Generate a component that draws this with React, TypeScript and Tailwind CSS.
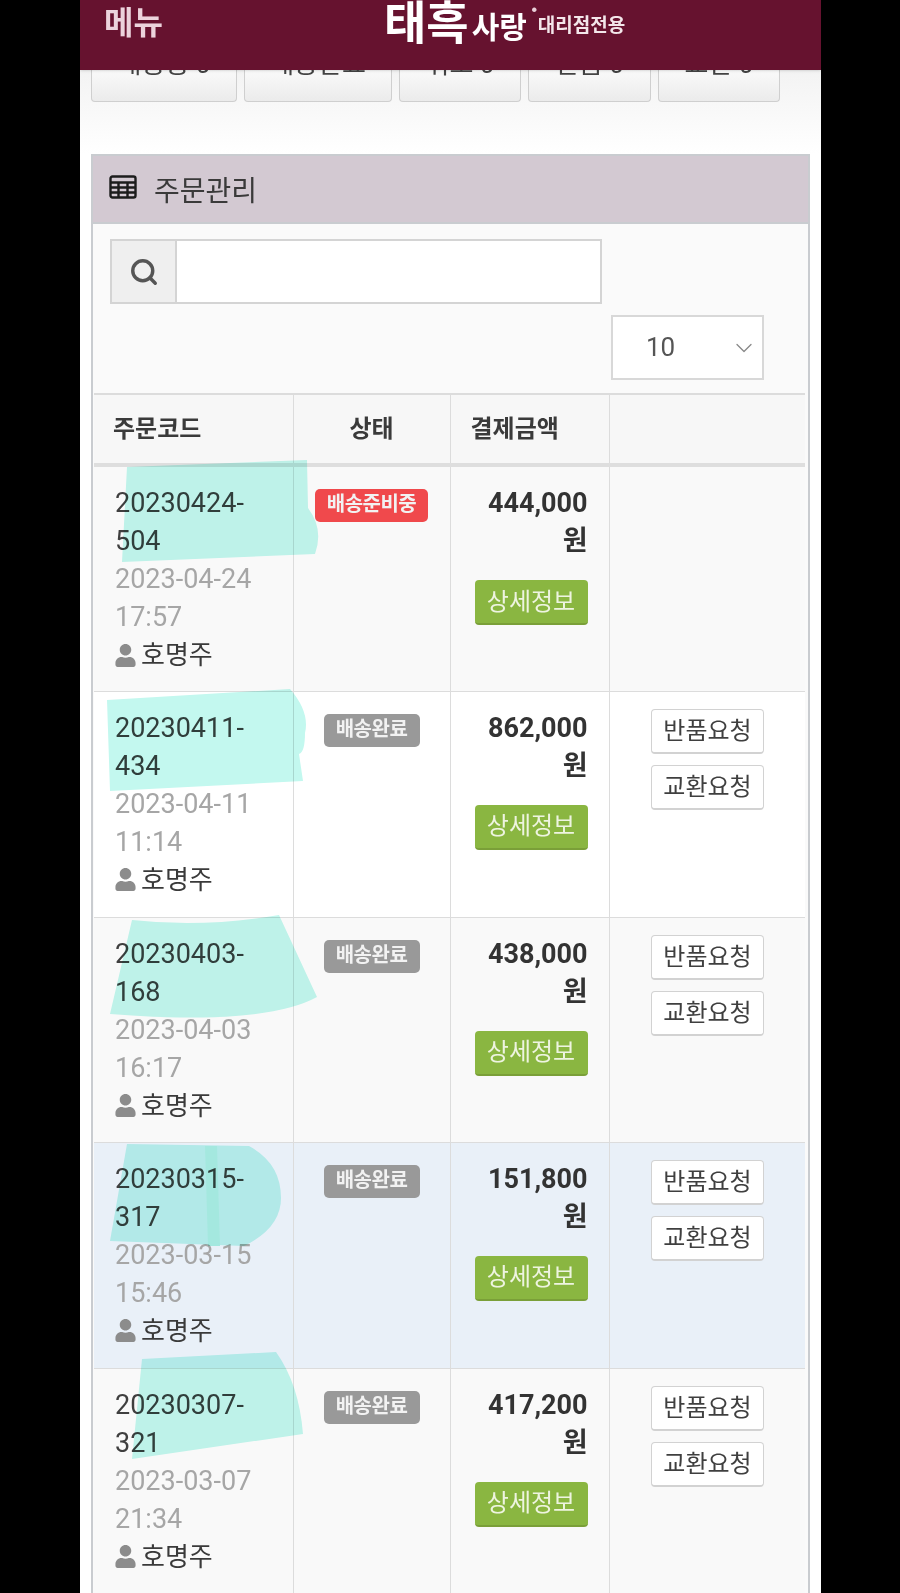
import React from 'react';
import { ChevronDown, Search } from 'lucide-react';
import { FaUser } from 'react-icons/fa';

const orders = [
  {
    code: '20230424-504', date: '2023-04-24 17:57', status: '배송준비중', amount: '444,000', height: 'h-[226px]', bg: 'bg-[#f9f9f9]',
    mark: 'M33 0 L213 -7 L214 41 Q230 62 221 87 L28 95 Z',
  },
  {
    code: '20230411-434', date: '2023-04-11 11:14', status: '배송완료', amount: '862,000', height: 'h-[226px]', bg: 'bg-white',
    mark: 'M13 8 L196 -3 Q216 20 211 41 Q211 60 205 62 L209 89 L16 99 Z',
  },
  {
    code: '20230403-168', date: '2023-04-03 16:17', status: '배송완료', amount: '438,000', height: 'h-[225px]', bg: 'bg-[#f9f9f9]',
    mark: 'M38 2 Q110 10 185 -3 L223 79 Q170 108 16 96 Z',
  },
  {
    code: '20230315-317', date: '2023-03-15 15:46', status: '배송완료', amount: '151,800', height: 'h-[226px]', bg: 'bg-[#e9f0f8]',
    mark: 'M33 1 L155 3 Q187 20 187 55 Q187 85 150 103 L16 98 Z',
  },
  {
    code: '20230307-321', date: '2023-03-07 21:34', status: '배송완료', amount: '417,200', height: 'h-[226px]', bg: 'bg-[#f9f9f9]',
    mark: 'M48 -10 L182 -17 Q205 15 209 65 L38 90 Z',
  },
];

const tabs = [
  { label: '배송중 0', width: 'w-[146px]' },
  { label: '배송완료', width: 'w-[148px]' },
  { label: '취소 0', width: 'w-[122px]' },
  { label: '반품 0', width: 'w-[123px]' },
  { label: '교환 0', width: 'w-[122px]' },
];

function Highlight({ d, strip }: { d: string; strip: boolean }) {
  return (
    <svg className="absolute left-0 top-0 z-10 overflow-visible mix-blend-multiply" width="240" height="110" viewBox="0 0 240 110">
      <path d={d} fill="#c3f8ef" />
      {strip && <polygon points="111,3 123,3 126,103 114,103" fill="#b4f7e6" />}
    </svg>
  );
}

function TableIcon() {
  return (
    <svg width="28" height="24" viewBox="0 0 28 24" fill="none" stroke="#1c1c1c" strokeWidth="2.4">
      <rect x="1.5" y="1.5" width="25" height="21" rx="2" />
      <path d="M1.5 7.5h25M1.5 12.5h25M1.5 17.5h25M9.5 7.5v15M18.5 7.5v15" />
    </svg>
  );
}

export default function App() {
  return (
    <div className="h-[1593px] w-[900px] overflow-hidden bg-black font-['Roboto','Noto_Sans_CJK_KR',sans-serif] text-[#3a3a3a]">
      <div className="ml-[80px] h-full w-[741px] bg-white">
        {/* Top bar */}
        <div className="relative flex h-[70px] items-start overflow-hidden bg-[#66122f] shadow">
          <span className="ml-[24px] mt-[4px] text-[32px] font-bold leading-[38px] text-[#ecd3dc]">메뉴</span>
          <div className="absolute left-[304px] top-[-5px] flex items-center whitespace-nowrap text-white">
            <span className="text-[46px] font-bold leading-[56px]">태흑</span>
            <span className="ml-[3px] mt-[10px] text-[30px] font-bold leading-[36px]">사랑</span>
            <span className="ml-[5px] self-start pt-[11px] text-[5px] leading-[6px] text-[#e8cfd8]">●</span>
            <span className="ml-[1px] mt-[6px] text-[19px] font-bold leading-[24px] text-[#f3e6ea]">대리점전용</span>
          </div>
        </div>

        {/* Status tabs, cut off by the top bar */}
        <div className="h-[84px] bg-gradient-to-b from-[#f3f3f3] to-white pl-[11px]">
          <div className="flex gap-[7px]">
            {tabs.map((tab) => (
              <div
                key={tab.label}
                className={`flex h-[32px] items-end justify-center overflow-hidden rounded-b border border-t-0 border-[#cfcfcf] bg-gradient-to-b from-[#fafafa] to-[#ebebeb] pb-[24px] text-[26px] leading-[26px] text-[#444] ${tab.width}`}
              >
                <span className="whitespace-nowrap">{tab.label}</span>
              </div>
            ))}
          </div>
        </div>

        {/* Order panel */}
        <div className="ml-[11px] h-[1439px] w-[719px] border-2 border-b-0 border-[#c9ccd0] bg-[#fafafa]">
          <div className="flex h-[68px] items-center border-b-2 border-[#c9ccd0] bg-[#d3c9d2] pl-[16px]">
            <div className="mb-[5px]">
              <TableIcon />
            </div>
            <span className="ml-[17px] mt-[6px] text-[28px] text-[#3a3a3a]">주문관리</span>
          </div>

          <div className="pl-[17px] pt-[15px]">
            <div className="flex h-[65px] w-[492px] border-2 border-[#d4d4d4] bg-white">
              <div className="flex w-[65px] items-center justify-center border-r-2 border-[#d4d4d4] bg-[#efefef]">
                <Search className="h-[30px] w-[30px] text-[#555]" strokeWidth={2.75} />
              </div>
            </div>
          </div>

          <div className="ml-[518px] mt-[11px] flex h-[65px] w-[153px] items-center justify-between border-2 border-[#d8d8d8] bg-white pl-[33px] pr-[4px] text-[26px] text-[#555]">
            <span>10</span>
            <ChevronDown className="h-[28px] w-[28px] text-[#888]" strokeWidth={1.1} />
          </div>

          <table className="ml-[1px] mt-[13px] w-[711px] table-fixed border-collapse">
            <thead>
              <tr className="h-[71px] border-b-[4px] border-t-2 border-b-[#dedede] border-t-[#dcdcdc] bg-[#f7f7f7] text-[24px] font-bold text-[#3a3a3a]">
                <th className="w-[199px] border-r border-[#dcdcdc] pl-[19px] text-left">주문코드</th>
                <th className="w-[157px] border-r border-[#dcdcdc] text-center">상태</th>
                <th className="w-[159px] border-r border-[#dcdcdc] pl-[20px] text-left">결제금액</th>
                <th className="w-[196px]" />
              </tr>
            </thead>
            <tbody>
              {orders.map((order, i) => (
                <tr key={order.code} className={`border-b border-[#dcdcdc] align-top ${order.height} ${order.bg}`}>
                  <td className="relative border-r border-[#dcdcdc] px-[21px] pt-[17px] text-[27px] leading-[38px]">
                    <Highlight d={order.mark} strip={i === 3} />
                    <div className="break-words text-[#3f3f3f]">{order.code}</div>
                    <div className="text-[#a6a6a6]">{order.date}</div>
                    <div className="flex items-center text-[26px]">
                      <FaUser className="mr-[5px] h-[23px] w-[21px] text-[#8c8c8c]" />
                      호명주
                    </div>
                  </td>
                  <td className="border-r border-[#dcdcdc] pt-[22px] text-center">
                    <span
                      className={`inline-block h-[33px] whitespace-nowrap rounded-[5px] text-[20px] font-bold leading-[31px] tracking-[-0.5px] text-[#f2f2f2] ${
                        order.status === '배송완료' ? 'w-[96px] bg-[#999999]' : 'w-[113px] bg-[#f0494c]'
                      }`}
                    >
                      {order.status}
                    </span>
                  </td>
                  <td className="border-r border-[#dcdcdc] px-[21px] pt-[17px] text-right text-[27px] font-bold leading-[38px] text-[#333]">
                    <div>{order.amount} 원</div>
                    <button className="ml-auto mt-[20px] block h-[45px] w-[113px] rounded-[4px] border-b-2 border-[#7a9f38] bg-[#8ab641] text-[24px] font-normal leading-[40px] text-[#eef4e0]">
                      상세정보
                    </button>
                  </td>
                  <td className="pr-[41px] pt-[17px]">
                    {i > 0 && (
                      <div className="ml-auto flex w-[113px] flex-col gap-[11px]">
                        <button className="h-[45px] rounded-[4px] border border-b-2 border-[#d2d2d2] bg-white text-[24px] leading-[40px] text-[#3f3f3f]">반품요청</button>
                        <button className="h-[45px] rounded-[4px] border border-b-2 border-[#d2d2d2] bg-white text-[24px] leading-[40px] text-[#3f3f3f]">교환요청</button>
                      </div>
                    )}
                  </td>
                </tr>
              ))}
            </tbody>
          </table>
        </div>
      </div>
    </div>
  );
}
